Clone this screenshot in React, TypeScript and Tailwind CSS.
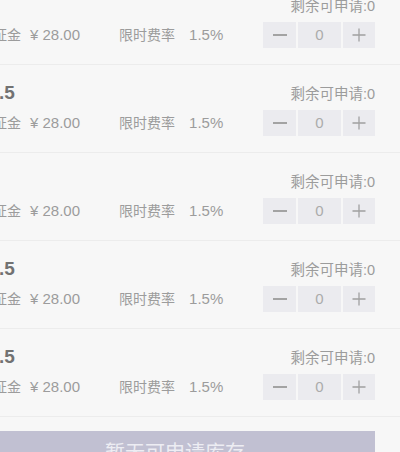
import React from 'react';

const rows = [
  { title: '12', remain: 0, deposit: '28.00', rate: '1.5%' },
  { title: '11.5', remain: 0, deposit: '28.00', rate: '1.5%' },
  { title: '12', remain: 0, deposit: '28.00', rate: '1.5%' },
  { title: '11.5', remain: 0, deposit: '28.00', rate: '1.5%' },
  { title: '11.5', remain: 0, deposit: '28.00', rate: '1.5%' },
];

function Stepper({ value }: { value: number }) {
  return (
    <div className="flex items-center gap-[2px]">
      <button className="w-[33px] h-[26px] bg-[#ebebef] flex items-center justify-center">
        <span className="block w-[14px] h-[1.5px] bg-[#a3a3a3]" />
      </button>
      <div className="w-[43px] h-[26px] bg-[#ebebef] flex items-center justify-center text-[15px] text-[#ababab]">
        {value}
      </div>
      <button className="w-[32px] h-[26px] bg-[#ebebef] flex items-center justify-center">
        <svg width="14" height="14" viewBox="0 0 14 14">
          <path d="M7 0.5V13.5M0.5 7H13.5" stroke="#a0a0a0" strokeWidth="1.3" />
        </svg>
      </button>
    </div>
  );
}

export default function App() {
  return (
    <div
      className="w-[400px] h-[452px] overflow-hidden bg-[#f7f7f7]"
      style={{ fontFamily: '"Liberation Sans", "Noto Sans CJK SC", sans-serif' }}
    >
      <div className="-ml-[25px] -mt-[23px] w-[425px]">
        {rows.map((r, i) => (
          <div key={i} className="pl-[4px] pr-[25px] pt-[17px] pb-[16px] border-b border-[#ececec]">
            <div className="flex items-center justify-between h-[22px]">
              <span className="text-[19px] font-bold text-[#727272]">{r.title}</span>
              <span className="pt-[3px] text-[14.5px] text-[#9c9c9c]">剩余可申请:{r.remain}</span>
            </div>
            <div className="mt-[6px] flex items-center justify-between h-[26px]">
              <div className="flex items-center text-[14px] text-[#9c9c9c]">
                <span>保证金</span>
                <span className="ml-[9px] text-[15px]">¥ {r.deposit}</span>
                <span className="ml-[39px]">限时费率</span>
                <span className="ml-[14px] text-[15px]">{r.rate}</span>
              </div>
              <Stepper value={0} />
            </div>
          </div>
        ))}
        <div className="pr-[25px] pt-[14px]">
          <button className="w-full h-[44px] bg-[#c1c0d2] text-[20px] text-[#ededf3] flex items-center justify-center">
            暂无可申请库存
          </button>
        </div>
      </div>
    </div>
  );
}
